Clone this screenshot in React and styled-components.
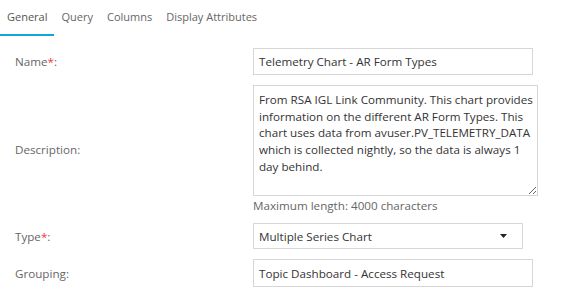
import React from 'react';
import styled, { createGlobalStyle } from 'styled-components';

const GlobalStyle = createGlobalStyle`
  body {
    margin: 0;
    background: #fff;
    font-family: "Open Sans", "Liberation Sans", sans-serif;
  }
`;

const Page = styled.div`
  width: 569px;
  height: 296px;
  overflow: hidden;
  background: #fff;
`;

const TabBar = styled.div`
  display: flex;
  height: 36px;
`;

const Tab = styled.div`
  padding: 0 7px;
  font-size: 11px;
  line-height: 34px;
  color: ${(p) => (p.active ? '#555' : '#666')};
  border-bottom: 2px solid ${(p) => (p.active ? '#11a6d8' : 'transparent')};
`;

const Form = styled.div`
  display: flex;
  flex-direction: column;
  gap: 10px;
  padding-top: 12px;
`;

const Row = styled.div`
  display: grid;
  grid-template-columns: 238px auto;
  align-items: center;
  padding-left: 15px;
`;

const Label = styled.div`
  font-size: 11.65px;
  color: #666;
`;

const Req = styled.span`
  color: #f0373e;
`;

const Field = styled.div`
  display: flex;
  flex-direction: column;
`;

const TextInput = styled.div`
  box-sizing: border-box;
  width: ${(p) => p.w}px;
  height: ${(p) => p.h || 27}px;
  border: 1px solid #d6d6d6;
  padding: 0 5px;
  font-size: 11.65px;
  color: #333;
  display: flex;
  align-items: center;
  justify-content: space-between;
`;

const TextArea = styled.textarea`
  box-sizing: border-box;
  width: 285px;
  height: 111px;
  border: 1px solid #d6d6d6;
  border-radius: 0;
  padding: 6px 2px 6px 5px;
  margin: 0;
  font-family: "Open Sans", "Liberation Sans", sans-serif;
  font-size: 11.65px;
  line-height: 16.7px;
  color: #333;
  resize: vertical;
  overflow: hidden;
  outline: none;
`;

const Hint = styled.div`
  margin-top: 2px;
  font-size: 11.65px;
  line-height: 15px;
  color: #666;
`;

const Caret = () => (
  <svg width="7" height="4" viewBox="0 0 7 4" style={{ marginRight: 10 }}>
    <polygon points="0,0 7,0 3.5,4" fill="#222" />
  </svg>
);

export default function App() {
  return (
    <Page>
      <GlobalStyle />
      <TabBar>
        <Tab active>General</Tab>
        <Tab>Query</Tab>
        <Tab>Columns</Tab>
        <Tab>Display Attributes</Tab>
      </TabBar>
      <Form>
        <Row>
          <Label>Name<Req>*</Req>:</Label>
          <TextInput w={280}>Telemetry Chart - AR Form Types</TextInput>
        </Row>
        <Row>
          <Label>Description:</Label>
          <Field>
            <TextArea
              readOnly
              defaultValue="From RSA IGL Link Community. This chart provides information on the different AR Form Types. This chart uses data from avuser.PV_TELEMETRY_DATA which is collected nightly, so the data is always 1 day behind."
            />
            <Hint>Maximum length: 4000 characters</Hint>
          </Field>
        </Row>
        <Row>
          <Label>Type<Req>*</Req>:</Label>
          <TextInput w={270} h={26}>
            Multiple Series Chart
            <Caret />
          </TextInput>
        </Row>
        <Row>
          <Label>Grouping:</Label>
          <TextInput w={280} h={28}>Topic Dashboard - Access Request</TextInput>
        </Row>
      </Form>
    </Page>
  );
}
